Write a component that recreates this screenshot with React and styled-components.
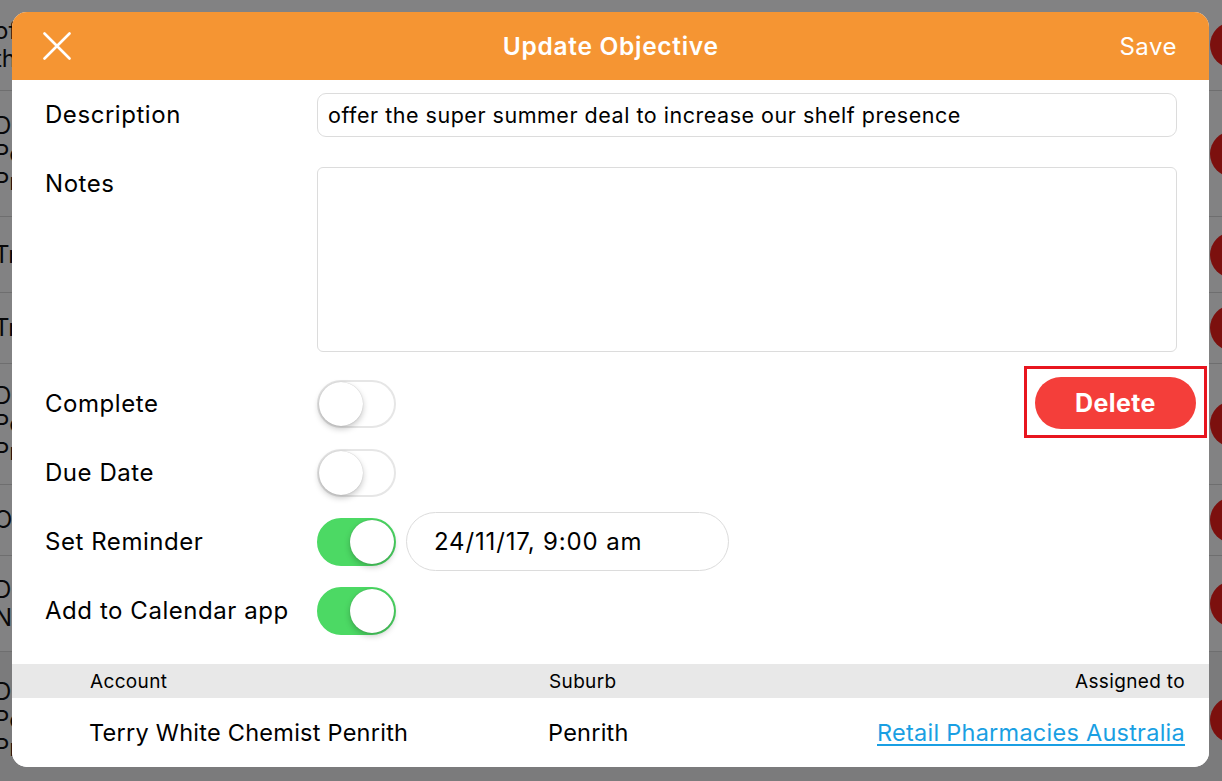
import React from "react";
import styled, { createGlobalStyle } from "styled-components";

const GlobalStyle = createGlobalStyle`
  html, body {
    margin: 0;
    padding: 0;
    width: 1222px;
    height: 781px;
    overflow: hidden;
    font-family: "Inter", "Noto Sans", sans-serif;
  }
`;

const Page = styled.div`
  position: relative;
  width: 1222px;
  height: 781px;
  overflow: hidden;
  background: #ffffff;
`;

// list behind the dialog
const BackList = styled.div`
  display: flex;
  flex-direction: column;
`;

const BackRow = styled.div`
  display: flex;
  align-items: center;
  justify-content: space-between;
  height: ${(p) => p.h}px;
  border-bottom: 1px solid #d8d8d8;
  background: ${(p) => (p.selected ? "#f2f2f2" : "#ffffff")};
`;

const BackText = styled.div`
  display: flex;
  flex-direction: column;
  margin-left: -6px;
  font-size: 24px;
  line-height: 28px;
  color: #111;
  white-space: nowrap;
`;

const BackDot = styled.div`
  width: 46px;
  height: 46px;
  border-radius: 50%;
  background: #f3201a;
  margin-right: -34px;
  flex-shrink: 0;
`;

const Dim = styled.div`
  position: absolute;
  inset: 0;
  background: rgba(0, 0, 2, 0.49);
`;

const Modal = styled.div`
  position: absolute;
  left: 12px;
  top: 12px;
  width: 1197px;
  height: 755px;
  background: #ffffff;
  border-radius: 15px;
  overflow: hidden;
  display: flex;
  flex-direction: column;
`;

const Header = styled.div`
  height: 68px;
  flex-shrink: 0;
  background: #f59533;
  display: flex;
  align-items: center;
  justify-content: space-between;
  padding: 0 32px 0 30px;
  color: #ffffff;
`;

const CloseBtn = styled.div`
  width: 30px;
  height: 30px;
  display: flex;
  align-items: center;
  justify-content: center;
`;

const Title = styled.div`
  font-size: 24.5px;
  font-weight: 600;
  letter-spacing: 0.7px;
  margin-left: 30px;
`;

const HeaderAction = styled.div`
  font-size: 24px;
  font-weight: 400;
  letter-spacing: 0.5px;
`;

const Body = styled.div`
  display: grid;
  grid-template-columns: 272px 1fr;
  padding: 0 32px 0 33px;
`;

const Label = styled.div`
  height: 69px;
  display: flex;
  align-items: center;
  font-size: 24px;
  letter-spacing: 0.55px;
  color: #000;
`;

const Field = styled.div`
  height: ${(p) => p.h || 69}px;
  display: flex;
  align-items: ${(p) => (p.top ? "flex-start" : "center")};
  gap: 10px;
`;

const TextInput = styled.div`
  box-sizing: border-box;
  width: 100%;
  height: 44px;
  border: 1.5px solid #dcdcdc;
  border-radius: 9px;
  padding: 0 10px;
  display: flex;
  align-items: center;
  font-size: 21.5px;
  letter-spacing: 0.52px;
  color: #000;
`;

const NotesBox = styled.div`
  box-sizing: border-box;
  width: 100%;
  height: 185px;
  margin-top: 18px;
  border: 1.5px solid #dcdcdc;
  border-radius: 6px;
`;

const Track = styled.div`
  box-sizing: border-box;
  width: 79px;
  height: 48px;
  border-radius: 24px;
  flex-shrink: 0;
  border: 2px solid ${(p) => (p.on ? "#4cd964" : "#e6e6e6")};
  background: ${(p) => (p.on ? "#4cd964" : "#ffffff")};
  display: flex;
  align-items: center;
  justify-content: ${(p) => (p.on ? "flex-end" : "flex-start")};
`;

const Knob = styled.div`
  width: 44px;
  height: 44px;
  border-radius: 50%;
  background: #ffffff;
  box-shadow: 0 3px 6px rgba(0, 0, 0, 0.22), 0 0 1px rgba(0, 0, 0, 0.25);
`;

const DatePill = styled.div`
  box-sizing: border-box;
  width: 323px;
  height: 59px;
  border: 1.5px solid #dcdcdc;
  border-radius: 30px;
  padding-left: 27px;
  display: flex;
  align-items: center;
  font-size: 24px;
  letter-spacing: 0.85px;
  color: #000;
`;

const Spacer = styled.div`
  flex: 1;
`;

const Highlight = styled.div`
  border: 3px solid #e8151f;
  padding: 8px 8px 6px;
  margin-right: -30px;
  margin-bottom: 4px;
`;

const DeleteBtn = styled.div`
  width: 161px;
  height: 52px;
  border-radius: 26px;
  background: #f43e3a;
  color: #ffffff;
  font-size: 25px;
  font-weight: 700;
  letter-spacing: 0.4px;
  display: flex;
  align-items: center;
  justify-content: center;
`;

const Table = styled.div`
  margin-top: auto;
  display: flex;
  flex-direction: column;
`;

const TableRow = styled.div`
  display: grid;
  grid-template-columns: 459px 1fr 1fr;
  align-items: center;
  height: ${(p) => (p.head ? 34 : 69)}px;
  padding: 0 24px 0 ${(p) => (p.head ? 78 : 77)}px;
  background: ${(p) => (p.head ? "#e8e8e8" : "#ffffff")};
  font-size: ${(p) => (p.head ? 19 : 23.5)}px;
  letter-spacing: ${(p) => (p.head ? 0.35 : 0.25)}px;
  color: #000;
`;

const Cell = styled.div`
  text-align: ${(p) => (p.right ? "right" : "left")};
  white-space: nowrap;
`;

const Link = styled.span`
  color: #1a9fe3;
  text-decoration: underline;
  text-underline-offset: 3px;
  text-decoration-thickness: 1.5px;
`;

const backRows = [
  { h: 90, lines: ["offer the super summer deal", "the"] },
  { h: 125, lines: ["Display stand", "Post the", "Promo"] },
  { h: 75, lines: ["Trade"] },
  { h: 70, lines: ["Trade"] },
  { h: 120, lines: ["Display stand", "Post", "Promo"] },
  { h: 70, lines: ["Outlet"] },
  { h: 95, lines: ["Display stand", "Next"] },
  { h: 136, lines: ["Display stand", "Post", "Promo"], selected: true },
];

const Toggle = ({ on }) => (
  <Track on={on ? 1 : 0}>
    <Knob />
  </Track>
);

export default function App() {
  return (
    <Page>
      <GlobalStyle />
      <BackList>
        {backRows.map((r, i) => (
          <BackRow key={i} h={r.h} selected={r.selected}>
            <BackText>
              {r.lines.map((l, j) => (
                <span key={j}>{l}</span>
              ))}
            </BackText>
            <BackDot />
          </BackRow>
        ))}
      </BackList>
      <Dim />
      <Modal>
        <Header>
          <CloseBtn>
            <svg width="28" height="28" viewBox="0 0 28 28">
              <path
                d="M1.5 1.5 L26.5 26.5 M26.5 1.5 L1.5 26.5"
                stroke="#fff"
                strokeWidth="2.6"
                strokeLinecap="round"
              />
            </svg>
          </CloseBtn>
          <Title>Update Objective</Title>
          <HeaderAction>Save</HeaderAction>
        </Header>

        <Body>
          <Label>Description</Label>
          <Field>
            <TextInput>offer the super summer deal to increase our shelf presence</TextInput>
          </Field>

          <Label style={{ alignSelf: "start" }}>Notes</Label>
          <Field h={220} top>
            <NotesBox />
          </Field>

          <Label>Complete</Label>
          <Field>
            <Toggle on={false} />
            <Spacer />
            <Highlight>
              <DeleteBtn>Delete</DeleteBtn>
            </Highlight>
          </Field>

          <Label>Due Date</Label>
          <Field>
            <Toggle on={false} />
          </Field>

          <Label>Set Reminder</Label>
          <Field>
            <Toggle on />
            <DatePill>24/11/17, 9:00 am</DatePill>
          </Field>

          <Label>Add to Calendar app</Label>
          <Field>
            <Toggle on />
          </Field>
        </Body>

        <Table>
          <TableRow head>
            <Cell>Account</Cell>
            <Cell>Suburb</Cell>
            <Cell right>Assigned to</Cell>
          </TableRow>
          <TableRow>
            <Cell>Terry White Chemist Penrith</Cell>
            <Cell>Penrith</Cell>
            <Cell right>
              <Link>Retail Pharmacies Australia</Link>
            </Cell>
          </TableRow>
        </Table>
      </Modal>
    </Page>
  );
}
